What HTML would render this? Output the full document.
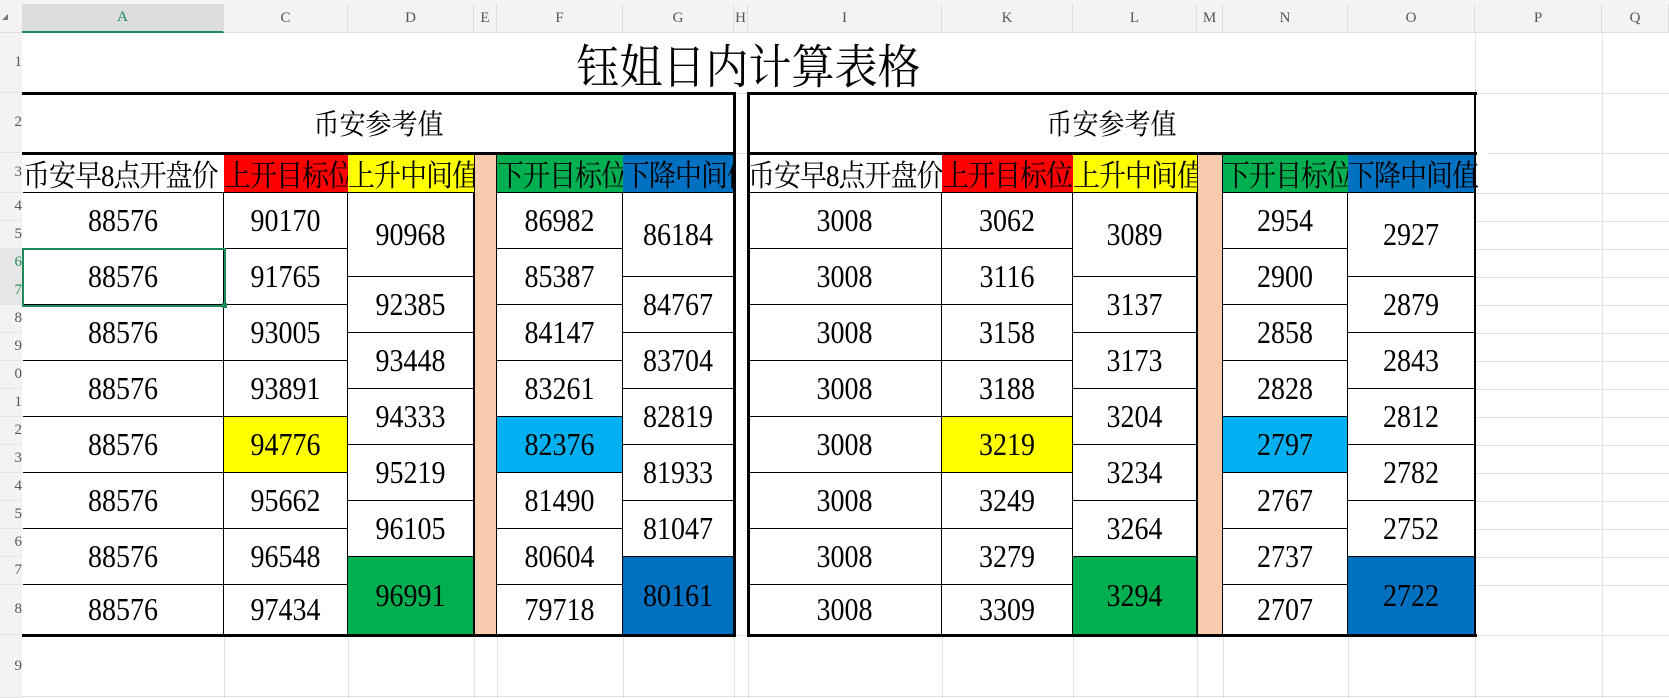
<!DOCTYPE html>
<html><head><meta charset="utf-8"><style>
body{margin:0;width:1669px;height:698px;overflow:hidden;background:#fff;position:relative;font-family:"Liberation Serif","Noto Serif CJK SC",serif}
div{position:absolute;box-sizing:border-box}
.hd{top:4px;height:29px;background:#f3f3f3;border-right:1px solid #ddd;color:#555;font:15px "Liberation Serif",serif;display:flex;align-items:center;justify-content:center;border-bottom:1px solid #ddd}
.rh{left:0;width:22px;background:#f3f3f3;color:#555;font:15px "Liberation Serif",serif;display:flex;align-items:center;justify-content:flex-end;overflow:hidden;border-bottom:1px solid #e4e4e4}
.c{border-right:1px solid #000;border-bottom:1px solid #000;display:flex;align-items:center;justify-content:center;font-size:28px;color:#000;padding-top:3px}
.c span,.h span{display:inline-block;transform:scaleY(1.12)}
.h{top:153px;height:40px;border-bottom:1px solid #000;font-family:"Liberation Serif","Noto Serif CJK SC",serif;font-size:27px;white-space:nowrap;overflow:hidden;line-height:40px;padding-top:3px;letter-spacing:-1px}
.gl{background:#e2e2e2}
.k{background:#000}
</style></head><body>
<div class="gl" style="left:1602px;top:33px;width:1px;height:665px"></div>
<div class="gl" style="left:1475px;top:33px;width:1px;height:665px"></div>
<div class="gl" style="left:22px;top:93px;width:1647px;height:1px"></div>
<div class="gl" style="left:22px;top:153px;width:1647px;height:1px"></div>
<div class="gl" style="left:1475px;top:193px;width:194px;height:1px"></div>
<div class="gl" style="left:1475px;top:221px;width:194px;height:1px"></div>
<div class="gl" style="left:1475px;top:249px;width:194px;height:1px"></div>
<div class="gl" style="left:1475px;top:277px;width:194px;height:1px"></div>
<div class="gl" style="left:1475px;top:305px;width:194px;height:1px"></div>
<div class="gl" style="left:1475px;top:333px;width:194px;height:1px"></div>
<div class="gl" style="left:1475px;top:361px;width:194px;height:1px"></div>
<div class="gl" style="left:1475px;top:389px;width:194px;height:1px"></div>
<div class="gl" style="left:1475px;top:417px;width:194px;height:1px"></div>
<div class="gl" style="left:1475px;top:445px;width:194px;height:1px"></div>
<div class="gl" style="left:1475px;top:473px;width:194px;height:1px"></div>
<div class="gl" style="left:1475px;top:501px;width:194px;height:1px"></div>
<div class="gl" style="left:1475px;top:529px;width:194px;height:1px"></div>
<div class="gl" style="left:1475px;top:557px;width:194px;height:1px"></div>
<div class="gl" style="left:1475px;top:585px;width:194px;height:1px"></div>
<div class="gl" style="left:22px;top:635px;width:1647px;height:1px"></div>
<div class="gl" style="left:22px;top:696px;width:1647px;height:1px"></div>
<div class="gl" style="left:224px;top:635px;width:1px;height:63px"></div>
<div class="gl" style="left:348px;top:635px;width:1px;height:63px"></div>
<div class="gl" style="left:474px;top:635px;width:1px;height:63px"></div>
<div class="gl" style="left:497px;top:635px;width:1px;height:63px"></div>
<div class="gl" style="left:623px;top:635px;width:1px;height:63px"></div>
<div class="gl" style="left:734px;top:635px;width:1px;height:63px"></div>
<div class="gl" style="left:748px;top:635px;width:1px;height:63px"></div>
<div class="gl" style="left:942px;top:635px;width:1px;height:63px"></div>
<div class="gl" style="left:1073px;top:635px;width:1px;height:63px"></div>
<div class="gl" style="left:1197px;top:635px;width:1px;height:63px"></div>
<div class="gl" style="left:1223px;top:635px;width:1px;height:63px"></div>
<div class="gl" style="left:1348px;top:635px;width:1px;height:63px"></div>

<div style="left:0;top:0;width:1669px;height:4px;background:#f3f3f3"></div>
<div style="left:0;top:4px;width:22px;height:29px;background:#f3f3f3;border-bottom:1px solid #ddd"></div>
<div style="left:2px;top:14px;width:0;height:0;border-left:6px solid transparent;border-bottom:6px solid #777"></div>
<div class="hd" style="left:22px;width:202px;background:#dcdcdc;border-bottom:2px solid #1e8a5a;color:#1e8a5a">A</div>
<div class="hd" style="left:224px;width:124px">C</div>
<div class="hd" style="left:348px;width:126px">D</div>
<div class="hd" style="left:474px;width:23px">E</div>
<div class="hd" style="left:497px;width:126px">F</div>
<div class="hd" style="left:623px;width:111px">G</div>
<div class="hd" style="left:734px;width:14px">H</div>
<div class="hd" style="left:748px;width:194px">I</div>
<div class="hd" style="left:942px;width:131px">K</div>
<div class="hd" style="left:1073px;width:124px">L</div>
<div class="hd" style="left:1197px;width:26px">M</div>
<div class="hd" style="left:1223px;width:125px">N</div>
<div class="hd" style="left:1348px;width:127px">O</div>
<div class="hd" style="left:1475px;width:127px">P</div>
<div class="hd" style="left:1602px;width:67px">Q</div>

<div class="rh" style="top:33px;height:60px">1</div>
<div class="rh" style="top:93px;height:60px">2</div>
<div class="rh" style="top:153px;height:40px">3</div>
<div class="rh" style="top:193px;height:28px">4</div>
<div class="rh" style="top:221px;height:28px">5</div>
<div class="rh" style="top:249px;height:28px;color:#1e8a5a;background:#e6e6e6">6</div>
<div class="rh" style="top:277px;height:28px;color:#1e8a5a;background:#e6e6e6">7</div>
<div class="rh" style="top:305px;height:28px">8</div>
<div class="rh" style="top:333px;height:28px">9</div>
<div class="rh" style="top:361px;height:28px">0</div>
<div class="rh" style="top:389px;height:28px">1</div>
<div class="rh" style="top:417px;height:28px">2</div>
<div class="rh" style="top:445px;height:28px">3</div>
<div class="rh" style="top:473px;height:28px">4</div>
<div class="rh" style="top:501px;height:28px">5</div>
<div class="rh" style="top:529px;height:28px">6</div>
<div class="rh" style="top:557px;height:28px">7</div>
<div class="rh" style="top:585px;height:50px">8</div>
<div class="rh" style="top:635px;height:63px">9</div>

<div style="left:22px;top:33px;width:1453px;height:60px;text-align:center;line-height:60px;font-size:43px;font-family:'Noto Serif CJK SC',serif;padding-top:2px"><span style="display:inline-block;transform:scaleY(1.1)">钰姐日内计算表格</span></div>
<div style="left:23px;top:93px;width:711px;height:60px;text-align:center;line-height:60px;font-size:26px;font-family:'Noto Serif CJK SC',serif"><span style="display:inline-block;transform:scaleY(1.1)">币安参考值</span></div>
<div style="left:748px;top:93px;width:727px;height:60px;text-align:center;line-height:60px;font-size:26px;font-family:'Noto Serif CJK SC',serif"><span style="display:inline-block;transform:scaleY(1.1)">币安参考值</span></div>

<div class="h" style="left:23px;width:201px"><span>币安早8点开盘价</span></div>
<div class="h" style="left:224px;width:124px;background:#ff0000"><span>上开目标位</span></div>
<div class="h" style="left:348px;width:126px;background:#ffff00"><span>上升中间值</span></div>
<div class="h" style="left:497px;width:126px;background:#00b050"><span>下开目标位</span></div>
<div class="h" style="left:623px;width:111px;background:#0070c0"><span>下降中间值</span></div>
<div class="h" style="left:748px;width:194px"><span>币安早8点开盘价</span></div>
<div class="h" style="left:942px;width:131px;background:#ff0000"><span>上开目标位</span></div>
<div class="h" style="left:1073px;width:124px;background:#ffff00"><span>上升中间值</span></div>
<div class="h" style="left:1223px;width:125px;background:#00b050"><span>下开目标位</span></div>
<div class="h" style="left:1348px;width:140px;background:linear-gradient(90deg,#0070c0 127px,#fff 127px);border-bottom:none"><span>下降中间值</span></div>
<div style="left:1348px;top:192px;width:127px;height:1px;background:#000"></div>

<div style="left:474px;top:153px;width:23px;height:482px;background:#f8cbad;border-left:1px solid #000;border-right:1px solid #000"></div>
<div style="left:1197px;top:153px;width:26px;height:482px;background:#f8cbad;border-left:1px solid #000;border-right:1px solid #000"></div>

<div class="c" style="left:23px;top:193px;width:201px;height:56px"><span>88576</span></div>
<div class="c" style="left:23px;top:249px;width:201px;height:56px"><span>88576</span></div>
<div class="c" style="left:23px;top:305px;width:201px;height:56px"><span>88576</span></div>
<div class="c" style="left:23px;top:361px;width:201px;height:56px"><span>88576</span></div>
<div class="c" style="left:23px;top:417px;width:201px;height:56px"><span>88576</span></div>
<div class="c" style="left:23px;top:473px;width:201px;height:56px"><span>88576</span></div>
<div class="c" style="left:23px;top:529px;width:201px;height:56px"><span>88576</span></div>
<div class="c" style="left:23px;top:585px;width:201px;height:50px"><span>88576</span></div>
<div class="c" style="left:224px;top:193px;width:124px;height:56px"><span>90170</span></div>
<div class="c" style="left:224px;top:249px;width:124px;height:56px"><span>91765</span></div>
<div class="c" style="left:224px;top:305px;width:124px;height:56px"><span>93005</span></div>
<div class="c" style="left:224px;top:361px;width:124px;height:56px"><span>93891</span></div>
<div class="c" style="left:224px;top:417px;width:124px;height:56px;background:#ffff00"><span>94776</span></div>
<div class="c" style="left:224px;top:473px;width:124px;height:56px"><span>95662</span></div>
<div class="c" style="left:224px;top:529px;width:124px;height:56px"><span>96548</span></div>
<div class="c" style="left:224px;top:585px;width:124px;height:50px"><span>97434</span></div>
<div class="c" style="left:348px;top:193px;width:126px;height:84px"><span>90968</span></div>
<div class="c" style="left:348px;top:277px;width:126px;height:56px"><span>92385</span></div>
<div class="c" style="left:348px;top:333px;width:126px;height:56px"><span>93448</span></div>
<div class="c" style="left:348px;top:389px;width:126px;height:56px"><span>94333</span></div>
<div class="c" style="left:348px;top:445px;width:126px;height:56px"><span>95219</span></div>
<div class="c" style="left:348px;top:501px;width:126px;height:56px"><span>96105</span></div>
<div class="c" style="left:348px;top:557px;width:126px;height:78px;background:#00b050"><span>96991</span></div>
<div class="c" style="left:497px;top:193px;width:126px;height:56px"><span>86982</span></div>
<div class="c" style="left:497px;top:249px;width:126px;height:56px"><span>85387</span></div>
<div class="c" style="left:497px;top:305px;width:126px;height:56px"><span>84147</span></div>
<div class="c" style="left:497px;top:361px;width:126px;height:56px"><span>83261</span></div>
<div class="c" style="left:497px;top:417px;width:126px;height:56px;background:#00b0f0"><span>82376</span></div>
<div class="c" style="left:497px;top:473px;width:126px;height:56px"><span>81490</span></div>
<div class="c" style="left:497px;top:529px;width:126px;height:56px"><span>80604</span></div>
<div class="c" style="left:497px;top:585px;width:126px;height:50px"><span>79718</span></div>
<div class="c" style="left:623px;top:193px;width:111px;height:84px"><span>86184</span></div>
<div class="c" style="left:623px;top:277px;width:111px;height:56px"><span>84767</span></div>
<div class="c" style="left:623px;top:333px;width:111px;height:56px"><span>83704</span></div>
<div class="c" style="left:623px;top:389px;width:111px;height:56px"><span>82819</span></div>
<div class="c" style="left:623px;top:445px;width:111px;height:56px"><span>81933</span></div>
<div class="c" style="left:623px;top:501px;width:111px;height:56px"><span>81047</span></div>
<div class="c" style="left:623px;top:557px;width:111px;height:78px;background:#0070c0"><span>80161</span></div>

<div class="c" style="left:748px;top:193px;width:194px;height:56px"><span>3008</span></div>
<div class="c" style="left:748px;top:249px;width:194px;height:56px"><span>3008</span></div>
<div class="c" style="left:748px;top:305px;width:194px;height:56px"><span>3008</span></div>
<div class="c" style="left:748px;top:361px;width:194px;height:56px"><span>3008</span></div>
<div class="c" style="left:748px;top:417px;width:194px;height:56px"><span>3008</span></div>
<div class="c" style="left:748px;top:473px;width:194px;height:56px"><span>3008</span></div>
<div class="c" style="left:748px;top:529px;width:194px;height:56px"><span>3008</span></div>
<div class="c" style="left:748px;top:585px;width:194px;height:50px"><span>3008</span></div>
<div class="c" style="left:942px;top:193px;width:131px;height:56px"><span>3062</span></div>
<div class="c" style="left:942px;top:249px;width:131px;height:56px"><span>3116</span></div>
<div class="c" style="left:942px;top:305px;width:131px;height:56px"><span>3158</span></div>
<div class="c" style="left:942px;top:361px;width:131px;height:56px"><span>3188</span></div>
<div class="c" style="left:942px;top:417px;width:131px;height:56px;background:#ffff00"><span>3219</span></div>
<div class="c" style="left:942px;top:473px;width:131px;height:56px"><span>3249</span></div>
<div class="c" style="left:942px;top:529px;width:131px;height:56px"><span>3279</span></div>
<div class="c" style="left:942px;top:585px;width:131px;height:50px"><span>3309</span></div>
<div class="c" style="left:1073px;top:193px;width:124px;height:84px"><span>3089</span></div>
<div class="c" style="left:1073px;top:277px;width:124px;height:56px"><span>3137</span></div>
<div class="c" style="left:1073px;top:333px;width:124px;height:56px"><span>3173</span></div>
<div class="c" style="left:1073px;top:389px;width:124px;height:56px"><span>3204</span></div>
<div class="c" style="left:1073px;top:445px;width:124px;height:56px"><span>3234</span></div>
<div class="c" style="left:1073px;top:501px;width:124px;height:56px"><span>3264</span></div>
<div class="c" style="left:1073px;top:557px;width:124px;height:78px;background:#00b050"><span>3294</span></div>
<div class="c" style="left:1223px;top:193px;width:125px;height:56px"><span>2954</span></div>
<div class="c" style="left:1223px;top:249px;width:125px;height:56px"><span>2900</span></div>
<div class="c" style="left:1223px;top:305px;width:125px;height:56px"><span>2858</span></div>
<div class="c" style="left:1223px;top:361px;width:125px;height:56px"><span>2828</span></div>
<div class="c" style="left:1223px;top:417px;width:125px;height:56px;background:#00b0f0"><span>2797</span></div>
<div class="c" style="left:1223px;top:473px;width:125px;height:56px"><span>2767</span></div>
<div class="c" style="left:1223px;top:529px;width:125px;height:56px"><span>2737</span></div>
<div class="c" style="left:1223px;top:585px;width:125px;height:50px"><span>2707</span></div>
<div class="c" style="left:1348px;top:193px;width:127px;height:84px"><span>2927</span></div>
<div class="c" style="left:1348px;top:277px;width:127px;height:56px"><span>2879</span></div>
<div class="c" style="left:1348px;top:333px;width:127px;height:56px"><span>2843</span></div>
<div class="c" style="left:1348px;top:389px;width:127px;height:56px"><span>2812</span></div>
<div class="c" style="left:1348px;top:445px;width:127px;height:56px"><span>2782</span></div>
<div class="c" style="left:1348px;top:501px;width:127px;height:56px"><span>2752</span></div>
<div class="c" style="left:1348px;top:557px;width:127px;height:78px;background:#0070c0"><span>2722</span></div>

<div class="k" style="left:22px;top:92px;width:713px;height:3px"></div>
<div class="k" style="left:747px;top:92px;width:730px;height:3px"></div>
<div class="k" style="left:22px;top:152px;width:713px;height:3px"></div>
<div class="k" style="left:747px;top:152px;width:730px;height:3px"></div>
<div class="k" style="left:22px;top:634px;width:713px;height:3px"></div>
<div class="k" style="left:747px;top:634px;width:730px;height:3px"></div>
<div class="k" style="left:733px;top:92px;width:3px;height:545px"></div>
<div class="k" style="left:747px;top:92px;width:3px;height:545px"></div>
<div class="k" style="left:1474px;top:92px;width:2px;height:545px"></div>

<div style="left:22px;top:248px;width:204px;height:59px;border:2px solid #1e8a5a"></div>
<div style="left:222px;top:303px;width:5px;height:5px;background:#1e8a5a"></div>
</body></html>
